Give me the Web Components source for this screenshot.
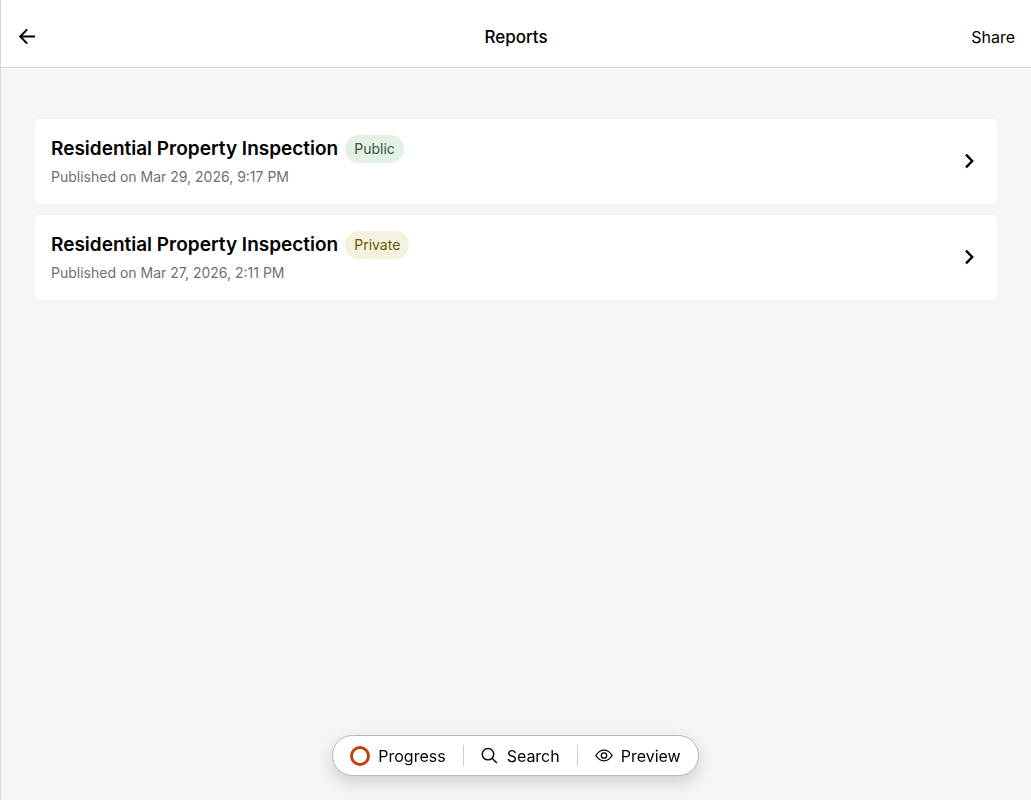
<!DOCTYPE html>
<html lang="en">
<head>
    <meta charset="utf-8">
    <meta name="viewport" content="width=device-width, initial-scale=1">
    <title>Reports</title>
    <style>
        body {
            margin: 0;
            font-family: Inter, "Liberation Sans", sans-serif;
            font-size: 16px;
            line-height: 24px;
            color: #000;
            background-color: #f5f5f5;
        }
    </style>
</head>
<body>
    <reports-page>
        <page-header slot="header" heading="Reports"></page-header>
        <report-card heading="Residential Property Inspection" status="Public">Published on Mar 29, 2026, 9:17 PM</report-card>
        <report-card heading="Residential Property Inspection" status="Private">Published on Mar 27, 2026, 2:11 PM</report-card>
        <floating-toolbar slot="toolbar">
            <toolbar-button icon="progress">Progress</toolbar-button>
            <toolbar-button icon="search">Search</toolbar-button>
            <toolbar-button icon="preview">Preview</toolbar-button>
        </floating-toolbar>
    </reports-page>

    <script>
        // Page shell: header, list of reports, toolbar over the bottom edge
        customElements.define('reports-page', class extends HTMLElement {
            constructor() {
                super();
                const shadow = this.attachShadow({ mode: 'open' });
                shadow.innerHTML = `
                    <style>
                        :host {
                            display: block;
                            box-sizing: border-box;
                            min-height: 100vh;
                            border-left: 1px solid #d8d8d8;
                        }
                        main {
                            display: flex;
                            flex-direction: column;
                            gap: 12px;
                            padding: 50px 34px 100px;
                        }
                        .toolbar {
                            position: fixed;
                            left: 0;
                            right: 0;
                            bottom: 24px;
                            display: flex;
                            justify-content: center;
                        }
                    </style>
                    <slot name="header"></slot>
                    <main><slot></slot></main>
                    <div class="toolbar"><slot name="toolbar"></slot></div>
                `;
            }
        });

        customElements.define('page-header', class extends HTMLElement {
            constructor() {
                super();
                const shadow = this.attachShadow({ mode: 'open' });
                shadow.innerHTML = `
                    <style>
                        :host {
                            display: block;
                            background-color: #fff;
                            padding-bottom: 1px;
                        }
                        header {
                            display: grid;
                            grid-template-columns: 1fr auto 1fr;
                            align-items: center;
                            padding: 6px 16px 0;
                            height: 61px;
                            border-bottom: 1px solid #d5d5d5;
                        }
                        h1 {
                            margin: 0;
                            font-size: 17px;
                            font-weight: 500;
                        }
                        button {
                            border: 0;
                            padding: 0;
                            background: none;
                            font: inherit;
                            color: inherit;
                            cursor: pointer;
                        }
                        .back {
                            justify-self: start;
                            display: flex;
                        }
                        .share {
                            justify-self: end;
                        }
                    </style>
                    <header>
                        <button class="back" type="button" aria-label="Back">
                            <svg width="22" height="22" viewBox="0 0 22 22" fill="none" stroke="#000" stroke-width="2">
                                <path d="M18 10.5H4M10.2 3.4L3.2 10.5L10.2 17.6"/>
                            </svg>
                        </button>
                        <h1></h1>
                        <button class="share" type="button">Share</button>
                    </header>
                `;
                shadow.querySelector('h1').textContent = this.getAttribute('heading');
            }
        });

        customElements.define('report-card', class extends HTMLElement {
            constructor() {
                super();
                const status = this.getAttribute('status');
                const shadow = this.attachShadow({ mode: 'open' });
                shadow.innerHTML = `
                    <style>
                        :host {
                            display: block;
                        }
                        a {
                            display: flex;
                            align-items: center;
                            justify-content: space-between;
                            padding: 16px;
                            border-radius: 5px;
                            background-color: #fff;
                            color: inherit;
                            text-decoration: none;
                        }
                        .title {
                            display: flex;
                            align-items: center;
                            gap: 7px;
                        }
                        h2 {
                            margin: 0;
                            font-size: 19px;
                            line-height: 28px;
                            font-weight: 600;
                        }
                        .badge {
                            padding: 0 9px;
                            border-radius: 14px;
                            font-size: 14px;
                            line-height: 28px;
                        }
                        .public {
                            background-color: #e2f0e5;
                            color: #3c533f;
                        }
                        .private {
                            background-color: #f5f1df;
                            color: #6b5800;
                        }
                        p {
                            margin: 4px 0 0;
                            font-size: 14px;
                            line-height: 20px;
                            color: #707070;
                        }
                        svg {
                            flex: none;
                        }
                    </style>
                    <a href="#">
                        <div>
                            <div class="title">
                                <h2></h2>
                                <span class="badge"></span>
                            </div>
                            <p><slot></slot></p>
                        </div>
                        <svg width="24" height="24" viewBox="0 0 24 24" fill="none" stroke="#000" stroke-width="2.4">
                            <path d="M9 5.7L15.2 12L9 18.3"/>
                        </svg>
                    </a>
                `;
                shadow.querySelector('h2').textContent = this.getAttribute('heading');
                const badge = shadow.querySelector('.badge');
                badge.textContent = status;
                badge.classList.add(status.toLowerCase());
            }
        });

        customElements.define('floating-toolbar', class extends HTMLElement {
            constructor() {
                super();
                const shadow = this.attachShadow({ mode: 'open' });
                shadow.innerHTML = `
                    <style>
                        :host {
                            display: flex;
                            align-items: center;
                            padding: 9px 0;
                            border: 1px solid #b8b8b8;
                            border-radius: 21px;
                            background-color: #fff;
                            box-shadow: 0 6px 16px rgba(0, 0, 0, 0.16);
                        }
                        ::slotted(:not(:first-child)) {
                            border-left: 1px solid #ccc;
                        }
                    </style>
                    <slot></slot>
                `;
            }
        });

        const icons = {
            progress: '<svg width="20" height="20" viewBox="0 0 20 20" fill="none" stroke="#c2410c" stroke-width="3"><circle cx="10" cy="10" r="8.5"/></svg>',
            search: '<svg width="18" height="18" viewBox="0 0 18 18" fill="none" stroke="#000" stroke-width="1.4"><circle cx="7" cy="7.2" r="5.7"/><path d="M11.1 11.3L15.8 16"/></svg>',
            preview: '<svg width="18" height="18" viewBox="0 0 18 18" fill="none" stroke="#000" stroke-width="1.3"><path d="M.9 8.5C3 5.1 5.7 3.2 9 3.2S15 5.1 17.1 8.5C15 11.9 12.3 13.8 9 13.8S3 11.9 .9 8.5Z"/><circle cx="9" cy="8.5" r="2.7"/></svg>'
        };

        customElements.define('toolbar-button', class extends HTMLElement {
            constructor() {
                super();
                const shadow = this.attachShadow({ mode: 'open' });
                shadow.innerHTML = `
                    <style>
                        :host {
                            display: block;
                        }
                        button {
                            display: flex;
                            align-items: center;
                            gap: 8px;
                            height: 21px;
                            padding: 0 17px;
                            border: 0;
                            background: none;
                            font: inherit;
                            color: inherit;
                            cursor: pointer;
                        }
                    </style>
                    <button type="button">${icons[this.getAttribute('icon')]}<span><slot></slot></span></button>
                `;
            }
        });
    </script>
</body>
</html>
